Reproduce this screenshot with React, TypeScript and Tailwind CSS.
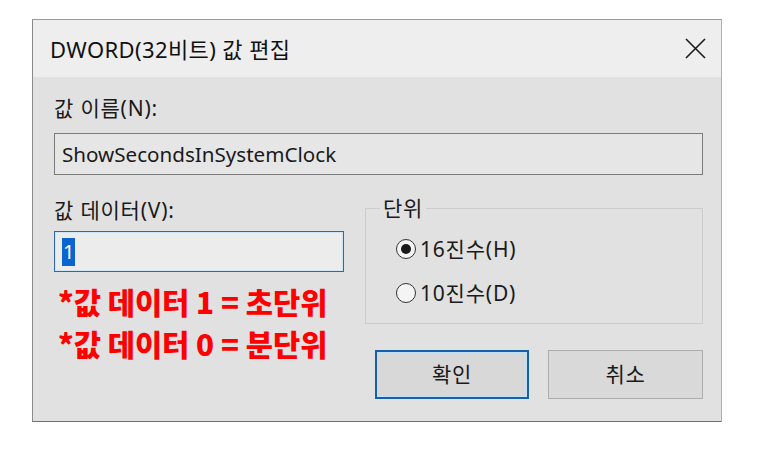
import React from "react";

const FONT = { fontFamily: '"Noto Sans", "Noto Sans CJK KR", sans-serif' };

function Radio({ checked, label }: { checked?: boolean; label: string }) {
  return (
    <div className="flex items-center h-[30px]">
      <div className="w-[20px] h-[20px] rounded-full border-[1.5px] border-[#333333] bg-[#f4f4f4] flex items-center justify-center">
        {checked && <div className="w-[10px] h-[10px] rounded-full bg-[#1a1a1a]" />}
      </div>
      <span className="ml-[4px] text-[21px] tracking-[0.8px] leading-[26px] text-[#1a1a1a]">{label}</span>
    </div>
  );
}

export default function App() {
  return (
    <div className="w-[764px] h-[457px] bg-white pt-[19px] pl-[32px]" style={FONT}>
      <div className="w-[690px] h-[403px] flex flex-col border-t border-l border-b border-r border-t-[#9a9a9a] border-l-[#8a8a8a] border-b-[#6f6f6f] border-r-[#b0b0b0]">
        <div className="h-[57px] bg-[#eeeeee] flex items-center justify-between pl-[17px] pr-[15px] shrink-0">
          <span className="text-[22px] tracking-[0.4px] leading-[28px] text-[#111111]">DWORD(32비트) 값 편집</span>
          <svg width="21" height="21" viewBox="0 0 21 21">
            <path d="M1 1 L20 20 M20 1 L1 20" stroke="#1a1a1a" strokeWidth="1.6" fill="none" />
          </svg>
        </div>
        <div className="flex-1 bg-[#e1e1e1] pl-[21px] pr-[18px] pt-[18px] text-[#1a1a1a]">
          <div className="text-[21px] tracking-[0.8px] leading-[26px]">값 이름(N):</div>
          <div className="mt-[12px] h-[42px] border border-[#7a7a7a] bg-[#e6e6e6] flex items-center pl-[7px] text-[20.6px]">
            ShowSecondsInSystemClock
          </div>
          <div className="mt-[22px] flex">
            <div className="w-[290px] flex flex-col">
              <div className="text-[21px] tracking-[0.8px] leading-[26px]">값 데이터(V):</div>
              <div className="mt-[8px] h-[41px] border border-[#2b6aa6] bg-[#ececec] flex items-center pl-[7px] shadow-[inset_0_0_0_1px_#cfe6f6]">
                <span className="bg-[#0a64cf] text-white text-[20px] leading-[28px] px-[1px]">1</span>
              </div>
              <div className="mt-[9px] text-[#ff0000] font-black text-[29.6px] leading-[42px] pl-[4px] whitespace-nowrap" style={{ fontFamily: '"Noto Sans CJK KR", sans-serif' }}>
                <div>*값 데이터 1 = 초단위</div>
                <div>*값 데이터 0 = 분단위</div>
              </div>
            </div>
            <div className="ml-[21px] flex-1 flex flex-col">
              <fieldset className="border border-[#cdcdcd] px-0 pb-[15px] m-0">
                <legend className="ml-[14px] px-[3px] text-[21px] tracking-[0.8px] leading-[22px]">단위</legend>
                <div className="mt-[15px] flex flex-col gap-[14px] pl-[30px]">
                  <Radio checked label="16진수(H)" />
                  <Radio label="10진수(D)" />
                </div>
              </fieldset>
              <div className="mt-[26px] flex gap-[19px] pl-[10px]">
                <button className="w-[154px] h-[49px] border-2 border-[#1660a8] bg-[#d8d8d8] shadow-[inset_0_0_0_1px_#bfe0f5] text-[21px] tracking-[0.8px] text-[#1a1a1a]">
                  확인
                </button>
                <button className="w-[155px] h-[49px] border border-[#adadad] bg-[#d9d9d9] text-[21px] tracking-[0.8px] text-[#1a1a1a]">
                  취소
                </button>
              </div>
            </div>
          </div>
        </div>
      </div>
    </div>
  );
}
